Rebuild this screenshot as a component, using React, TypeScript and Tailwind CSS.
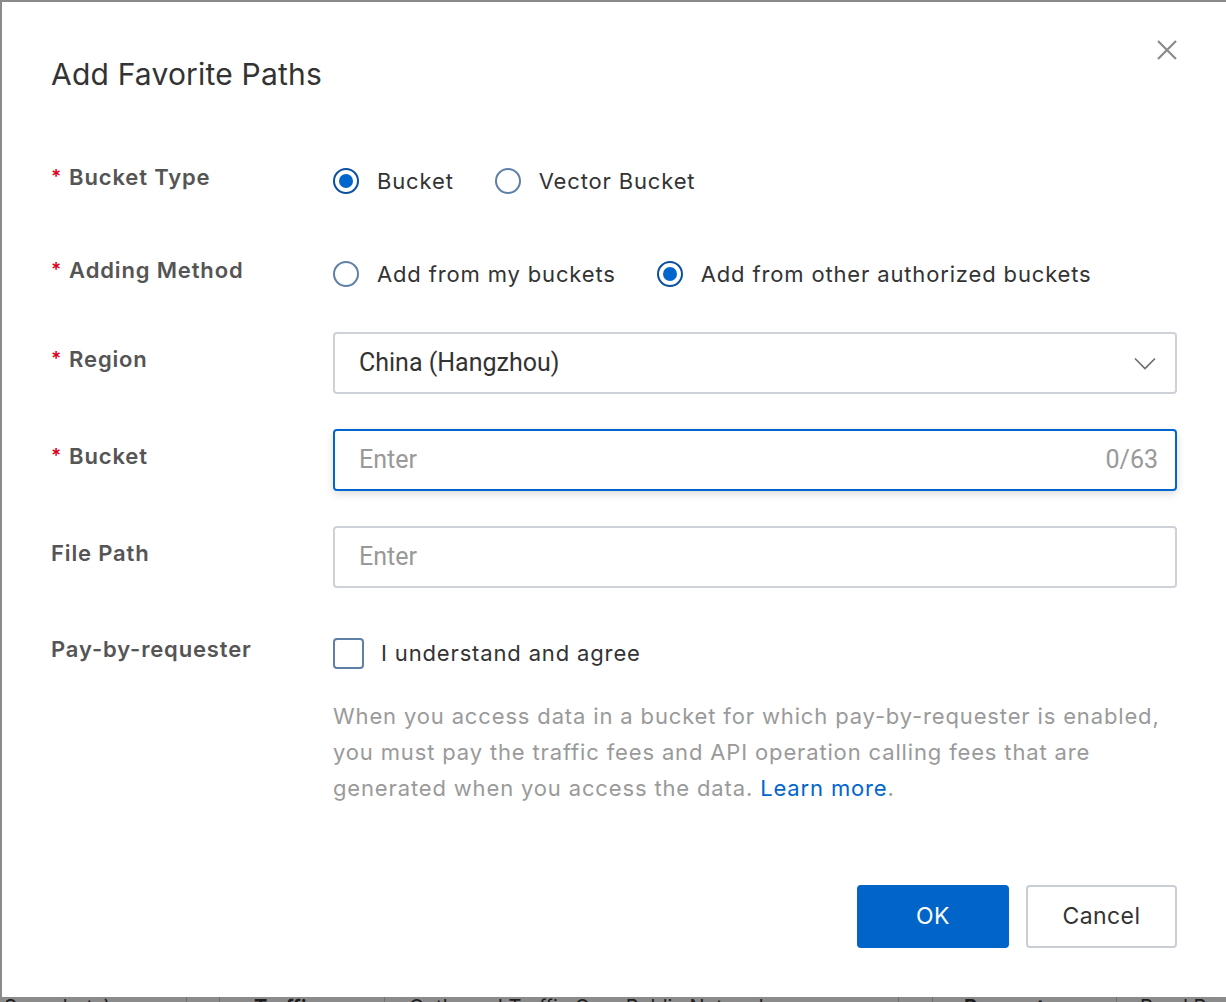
import { useState } from "react";

type Option = { key: string; label: string };

const bucketTypes: Option[] = [
  { key: "bucket", label: "Bucket" },
  { key: "vector", label: "Vector Bucket" },
];

const addingMethods: Option[] = [
  { key: "mine", label: "Add from my buckets" },
  { key: "other", label: "Add from other authorized buckets" },
];

const sans = "font-['Inter','Noto_Sans',sans-serif]";
const roboto = "font-['Roboto','Liberation_Sans',sans-serif]";

function Radio({ checked }: { checked: boolean }) {
  return checked ? (
    <span className="flex h-[26px] w-[26px] shrink-0 items-center justify-center rounded-full border-2 border-[#0b4f9e] bg-white">
      <span className="h-[14px] w-[14px] rounded-full bg-[#0066cc]" />
    </span>
  ) : (
    <span className="h-[26px] w-[26px] shrink-0 rounded-full border-2 border-[#5f80a6] bg-white" />
  );
}

function RadioGroup({
  options,
  value,
  onChange,
}: {
  options: Option[];
  value: string;
  onChange: (key: string) => void;
}) {
  return (
    <div className="flex h-[62px] items-center gap-[41px]">
      {options.map((o) => (
        <button
          key={o.key}
          onClick={() => onChange(o.key)}
          className="flex items-center gap-[18px] text-[22px] tracking-[0.85px] text-[#333]"
        >
          <Radio checked={value === o.key} />
          <span>{o.label}</span>
        </button>
      ))}
    </div>
  );
}

function Label({ text, required }: { text: string; required?: boolean }) {
  return (
    <div className="flex h-[62px] w-[282px] shrink-0 items-center pb-[7px] text-[22px] font-semibold tracking-[0.85px] text-[#555]">
      {required && <span className="mr-[7px] text-[19px] text-[#d9001b]">*</span>}
      <span>{text}</span>
    </div>
  );
}

function Chevron() {
  return (
    <svg width="22" height="13" viewBox="0 0 22 13" fill="none">
      <path d="M1 1.5l10 10 10-10" stroke="#6b6b6b" strokeWidth="1.6" />
    </svg>
  );
}

function CloseIcon() {
  return (
    <svg width="22" height="22" viewBox="0 0 22 22" fill="none">
      <path d="M2 2l18 18M20 2L2 20" stroke="#8a8a8a" strokeWidth="2.2" />
    </svg>
  );
}

export default function App() {
  const [bucketType, setBucketType] = useState("bucket");
  const [method, setMethod] = useState("other");
  const [bucket, setBucket] = useState("");
  const [path, setPath] = useState("");
  const [agreed, setAgreed] = useState(false);

  return (
    <div className={`flex h-[1002px] w-full flex-col overflow-hidden bg-[#8b8b8b] ${sans}`}>
      <div className="relative ml-[2px] mt-[2px] h-[995px] shrink-0 bg-white pl-[49px] pr-[49px]">
        <button className="absolute right-[48px] top-[37px]">
          <CloseIcon />
        </button>

        <h2 className="mt-[54px] text-[30px] leading-[36px] font-normal tracking-[0.2px] text-[#333]">
          Add Favorite Paths
        </h2>

        <div className="mt-[58px] flex">
          <Label text="Bucket Type" required />
          <RadioGroup options={bucketTypes} value={bucketType} onChange={setBucketType} />
        </div>

        <div className="mt-[31px] flex">
          <Label text="Adding Method" required />
          <RadioGroup options={addingMethods} value={method} onChange={setMethod} />
        </div>

        <div className="mt-[27px] flex">
          <Label text="Region" required />
          <div className="flex h-[62px] flex-1 items-center justify-between rounded-[4px] border-2 border-[#cdd1d8] pl-[24px] pr-[19px]">
            <span className={`text-[25px] text-[#333] ${roboto}`}>China (Hangzhou)</span>
            <Chevron />
          </div>
        </div>

        <div className="mt-[35px] flex">
          <Label text="Bucket" required />
          <div className="flex h-[62px] flex-1 items-center rounded-[4px] border-2 border-[#0066cc] pl-[24px] pr-[17px] shadow-[0_3px_8px_rgba(0,0,0,0.14)]">
            <input
              value={bucket}
              onChange={(e) => setBucket(e.target.value.slice(0, 63))}
              placeholder="Enter"
              className={`flex-1 bg-transparent text-[25px] text-[#333] outline-none placeholder:text-[#999] ${roboto}`}
            />
            <span className={`text-[25px] text-[#999] ${roboto}`}>{bucket.length}/63</span>
          </div>
        </div>

        <div className="mt-[35px] flex">
          <Label text="File Path" />
          <div className="flex h-[62px] flex-1 items-center rounded-[4px] border-2 border-[#cdd1d8] pl-[24px]">
            <input
              value={path}
              onChange={(e) => setPath(e.target.value)}
              placeholder="Enter"
              className={`flex-1 bg-transparent text-[25px] text-[#333] outline-none placeholder:text-[#999] ${roboto}`}
            />
          </div>
        </div>

        <div className="mt-[34px] flex">
          <Label text="Pay-by-requester" />
          <div className="flex-1">
            <button
              onClick={() => setAgreed(!agreed)}
              className="flex h-[62px] items-center gap-[17px] text-[22px] tracking-[0.85px] text-[#333]"
            >
              <span className="h-[31px] w-[31px] rounded-[4px] border-2 border-[#5f80a6] bg-white">
                {agreed && (
                  <svg viewBox="0 0 24 24" className="h-full w-full">
                    <path d="M5 12l5 5 9-10" stroke="#0066cc" strokeWidth="2.5" fill="none" />
                  </svg>
                )}
              </span>
              <span>I understand and agree</span>
            </button>
            <p className="mt-[14px] whitespace-nowrap text-[22px] leading-[36px] tracking-[0.85px] text-[#9a9a9a]">
              When you access data in a bucket for which pay-by-requester is enabled,
              <br />
              you must pay the traffic fees and API operation calling fees that are
              <br />
              generated when you access the data. <a className="text-[#0066cc]">Learn more</a>.
            </p>
          </div>
        </div>

        <div className="mt-[79px] flex justify-end gap-[17px]">
          <button className="h-[63px] w-[152px] rounded-[4px] bg-[#0064c8] text-[23px] tracking-[0.4px] text-white">
            OK
          </button>
          <button className="h-[63px] w-[151px] rounded-[4px] border-2 border-[#c9cdd4] bg-white text-[23px] tracking-[0.4px] text-[#333]">
            Cancel
          </button>
        </div>
      </div>

      {/* page behind the overlay, mostly covered */}
      <div className="flex h-[5px] shrink-0 items-start overflow-hidden text-[20px] leading-[20px] text-[#1c1c1c]">
        <span className="ml-[4px] w-[150px] shrink-0">Snapshots)</span>
        <span className="w-[32px] shrink-0">⌄</span>
        <span className="h-full w-[33px] shrink-0 border-l border-[#707070]" />
        <span className="h-full w-[35px] shrink-0 border-l border-[#707070]" />
        <span className="w-[130px] shrink-0 font-bold">Traffic</span>
        <span className="h-full w-[25px] shrink-0 border-l border-[#707070]" />
        <span className="w-[455px] shrink-0">Outbound Traffic Over Public Network</span>
        <span className="w-[34px] shrink-0">⌄</span>
        <span className="h-full w-[34px] shrink-0 border-l border-[#707070]" />
        <span className="h-full w-[32px] shrink-0 border-l border-[#707070]" />
        <span className="w-[152px] shrink-0 font-bold">Requests</span>
        <span className="h-full w-[24px] shrink-0 border-l border-[#707070]" />
        <span className="shrink-0">Read Requests</span>
      </div>
    </div>
  );
}
